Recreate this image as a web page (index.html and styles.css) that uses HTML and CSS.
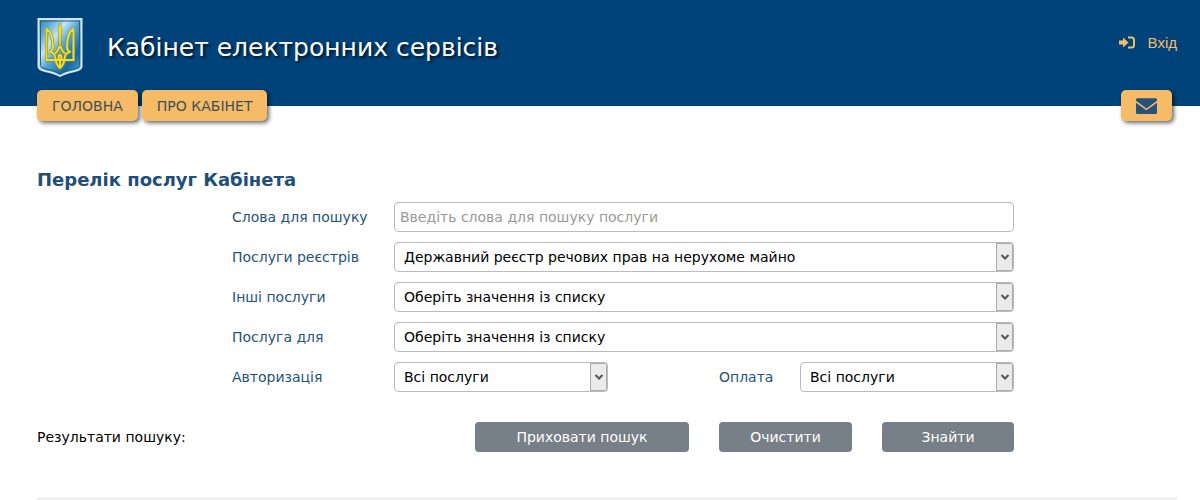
FILE: index.html
```html
<!DOCTYPE html>
<html lang="uk">
<head>
    <meta charset="UTF-8">
    <meta name="viewport" content="width=device-width, initial-scale=1.0">
    <title>Кабінет електронних сервісів</title>
    <link rel="stylesheet" href="styles.css">
</head>
<body>
    <header class="header">
        <div class="header-top">
            <a class="brand" href="#">
                <svg class="emblem" viewBox="0 0 46 60" aria-hidden="true">
                    <defs>
                        <linearGradient id="shield" x1="0" y1="0" x2="1" y2="1">
                            <stop offset="0" stop-color="#2f7fb5"/>
                            <stop offset="0.2" stop-color="#6fb4d8"/>
                            <stop offset="0.35" stop-color="#c4e4f0"/>
                            <stop offset="0.5" stop-color="#5ba6cf"/>
                            <stop offset="0.75" stop-color="#1468a4"/>
                            <stop offset="1" stop-color="#62b4dc"/>
                        </linearGradient>
                    </defs>
                    <path d="M1.500 1.500H44.500V49Q44.500 52 38 53.500Q28 55.500 23 58.500Q18 55.500 8 53.500Q1.500 52 1.500 49Z" fill="url(#shield)" stroke="#d5e3ea" stroke-width="2"/>
                    <path d="M3.500 3.500H42.500V48Q42.500 50 37 51.500Q28 53 23 56Q18 53 9 51.500Q3.500 50 3.500 48Z" fill="none" stroke="#235f86" stroke-width="1"/>
                    <g fill="none" stroke-linejoin="miter">
                        <path id="trident" d="M9.500 11V42.500H36.500V11M9.500 11Q15 16 15.500 23L16 30Q16 33 12.500 34.500Q18 35 18.500 41Q19 47 23 50.500Q27 47 27.500 41Q28 35 33.500 34.500Q30 33 30 30L30.500 23Q31 16 36.500 11M23 24Q23 32 18 36M23 24Q23 32 28 36M23 37Q20 40 23 43Q26 40 23 37M23 43V50" stroke="#77862c" stroke-width="3"/>
                        <path d="M9.500 11V42.500H36.500V11M9.500 11Q15 16 15.500 23L16 30Q16 33 12.500 34.500Q18 35 18.500 41Q19 47 23 50.500Q27 47 27.500 41Q28 35 33.500 34.500Q30 33 30 30L30.500 23Q31 16 36.500 11M23 24Q23 32 18 36M23 24Q23 32 28 36M23 37Q20 40 23 43Q26 40 23 37M23 43V50" stroke="#f0dc34" stroke-width="2"/>
                    </g>
                    <path d="M23 5.500Q26 10 24.500 17L24 28H22L21.500 17Q20 10 23 5.500Z" fill="#f0dc34" stroke="#77862c" stroke-width="0.500"/>
                </svg>
                <span class="brand-name">Кабінет електронних сервісів</span>
            </a>
            <a class="login" href="#">
                <svg class="login-icon" viewBox="0 0 16 14" aria-hidden="true">
                    <path d="M0 4.500H4V1.500L9.500 6.500L4 11.500V8.500H0Z" fill="currentColor"/>
                    <path d="M9 1.500H12.500Q15 1.500 15 4V9Q15 11.500 12.500 11.500H9" fill="none" stroke="currentColor" stroke-width="2"/>
                </svg>
                <span>Вхід</span>
            </a>
        </div>
        <nav class="nav">
            <a class="tab" href="#">ГОЛОВНА</a>
            <a class="tab" href="#">ПРО КАБІНЕТ</a>
            <a class="tab tab-mail" href="#" aria-label="Повідомлення">
                <svg class="mail-icon" viewBox="0 0 22 18" aria-hidden="true">
                    <path d="M1.500 1H20.500Q22 1 22 2.500V3.500L11 11.500L0 3.500V2.500Q0 1 1.500 1Z" fill="currentColor"/>
                    <path d="M0 5.500L11 13.500L22 5.500V16Q22 17.500 20.500 17.500H1.500Q0 17.500 0 16Z" fill="currentColor"/>
                </svg>
            </a>
        </nav>
    </header>

    <main class="content">
        <h1 class="page-title">Перелік послуг Кабінета</h1>
        <form id="search" class="search-form">
            <label for="words">Слова для пошуку</label>
            <input id="words" class="field wide" type="text" placeholder="Введіть слова для пошуку послуги">

            <label for="registry">Послуги реєстрів</label>
            <select id="registry" class="field wide">
                <option>Державний реєстр речових прав на нерухоме майно</option>
            </select>

            <label for="other">Інші послуги</label>
            <select id="other" class="field wide">
                <option>Оберіть значення із списку</option>
            </select>

            <label for="target">Послуга для</label>
            <select id="target" class="field wide">
                <option>Оберіть значення із списку</option>
            </select>

            <label for="auth">Авторизація</label>
            <select id="auth" class="field">
                <option>Всі послуги</option>
            </select>
            <label class="label-pay" for="pay">Оплата</label>
            <select id="pay" class="field">
                <option>Всі послуги</option>
            </select>
        </form>
        <div class="actions">
            <span>Результати пошуку:</span>
            <button class="btn" type="button">Приховати пошук</button>
            <button class="btn" type="reset" form="search">Очистити</button>
            <button class="btn" type="submit" form="search">Знайти</button>
        </div>
        <hr class="divider">
    </main>
</body>
</html>
```
FILE: styles.css
```css
* {
    box-sizing: border-box;
}
body {
    margin: 0;
    background: #fff;
    color: #000;
    font-family: Verdana, "DejaVu Sans", sans-serif;
    font-size: 14px;
    line-height: 20px;
}
a {
    text-decoration: none;
}
.header {
    padding: 17px 23px 0 37px;
    background: linear-gradient(#00437a 106px, transparent 106px);
}
.header-top {
    display: flex;
    justify-content: space-between;
    align-items: flex-start;
}
.brand {
    display: flex;
    align-items: center;
    gap: 24px;
    color: #fff;
}
.emblem {
    width: 46px;
    height: 61px;
}
.brand-name {
    font-size: 25px;
    line-height: 32px;
    text-shadow: 2px 2px 3px rgba(0, 0, 0, 0.7);
}
.login {
    display: flex;
    align-items: center;
    gap: 13px;
    margin-top: 16px;
    color: #f6bb66;
    font-family: Arial, "Liberation Sans", sans-serif;
    font-size: 15px;
}
.login-icon {
    width: 16px;
    height: 14px;
}
.nav {
    display: flex;
    gap: 4px;
    margin-top: 12px;
}
.tab {
    padding: 6px 15px 5px;
    border-radius: 5px;
    background: #f6bb66;
    box-shadow: 2px 2px 4px rgba(0, 0, 0, 0.6);
    color: #3c5058;
    line-height: 20px;
}
.tab-mail {
    display: flex;
    align-items: center;
    margin-left: auto;
    margin-right: 5px;
    color: #24527a;
}
.mail-icon {
    width: 21px;
    height: 18px;
}
.content {
    padding: 0 23px 0 37px;
}
.page-title {
    margin: 47px 0 10px;
    color: #1f4e79;
    font-size: 18px;
    line-height: 24px;
}
.search-form {
    display: grid;
    grid-template-columns: 162fr 214fr 111fr 81fr 214fr;
    align-items: center;
    row-gap: 10px;
    margin: 0 163px 0 195px;
    color: #24527a;
}
.label-pay {
    grid-column: 4;
}
.field {
    width: 100%;
    height: 30px;
    padding: 0 5px;
    border: 1px solid #bbb;
    border-radius: 4px;
    background: #fff;
    color: #000;
    font: inherit;
}
.field::placeholder {
    color: #999;
    opacity: 1;
}
.wide {
    grid-column: 2 / -1;
}
select.field {
    padding: 0 22px 0 9px;
    appearance: none;
    background: #fff url("data:image/svg+xml,%3Csvg xmlns='http://www.w3.org/2000/svg' width='17' height='28'%3E%3Crect x='.5' y='.5' width='16' height='27' fill='%23ebebeb' stroke='%23aaa'/%3E%3Cpath d='M5.500 12L9 15.500L12.500 12' fill='none' stroke='%23555' stroke-width='2'/%3E%3C/svg%3E") no-repeat right center;
}
.actions {
    display: grid;
    grid-template-columns: 408fr 214fr 133fr 132fr;
    align-items: center;
    column-gap: 30px;
    margin: 30px 163px 0 0;
}
.btn {
    height: 30px;
    padding: 0;
    border: 0;
    border-radius: 4px;
    background: #777f88;
    color: #fff;
    font: inherit;
    cursor: pointer;
}
.divider {
    height: 3px;
    margin: 45px 0 0;
    border: 0;
    background: #f1f1f1;
}
```
